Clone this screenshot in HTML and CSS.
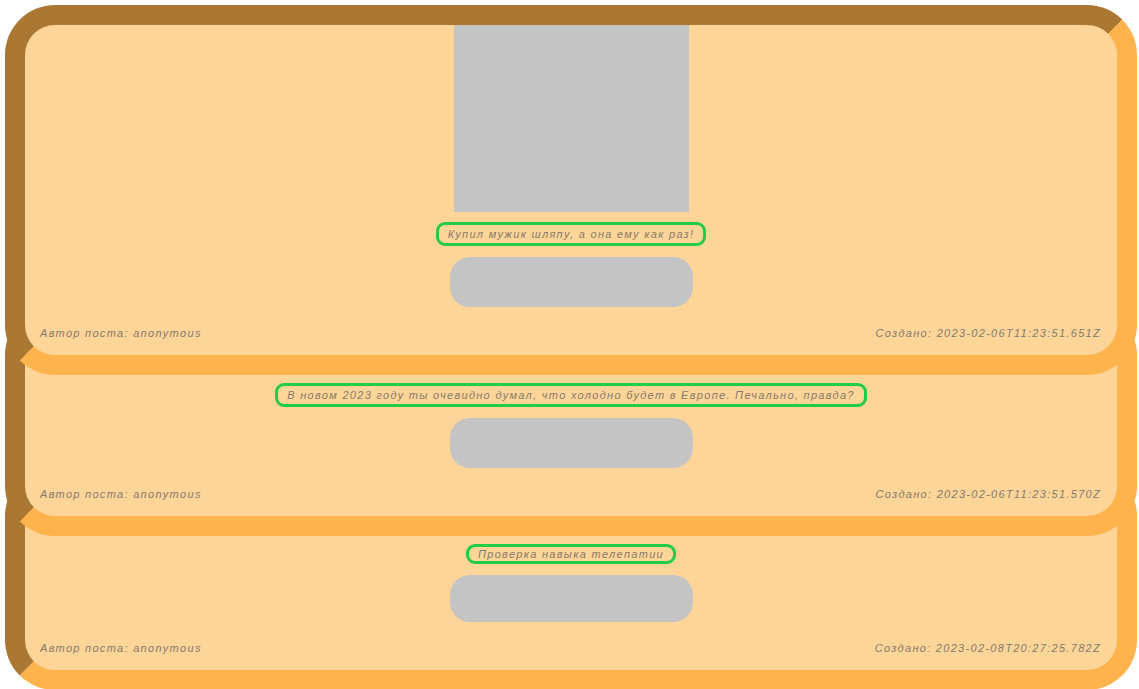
FILE: index.html
```html
<!DOCTYPE html>
<html lang="ru">
<head>
<meta charset="utf-8">
<title>Посты</title>
<link rel="stylesheet" href="styles.css">
</head>
<body>
<main class="feed">
  <article class="post">
    <div class="photo"></div>
    <p class="caption">Купил мужик шляпу, а она ему как раз!</p>
    <button class="action" type="button"></button>
    <footer class="meta">
      <span>Автор поста: anonymous</span>
      <span>Создано: 2023-02-06T11:23:51.651Z</span>
    </footer>
  </article>
  <article class="post">
    <p class="caption">В новом 2023 году ты очевидно думал, что холодно будет в Европе. Печально, правда?</p>
    <button class="action" type="button"></button>
    <footer class="meta">
      <span>Автор поста: anonymous</span>
      <span>Создано: 2023-02-06T11:23:51.570Z</span>
    </footer>
  </article>
  <article class="post">
    <p class="caption">Проверка навыка телепатии</p>
    <button class="action" type="button"></button>
    <footer class="meta">
      <span>Автор поста: anonymous</span>
      <span>Создано: 2023-02-08T20:27:25.782Z</span>
    </footer>
  </article>
</main>
</body>
</html>
```
FILE: styles.css
```css
html, body {
  margin: 0;
  padding: 0;
  background: #ffffff;
}

body {
  font-family: "Liberation Sans", Arial, sans-serif;
}

.feed {
  display: flex;
  flex-direction: column;
  padding: 5px 2px 5px 5px;
}

.post {
  position: relative;
  display: flex;
  flex-direction: column;
  align-items: center;
  background: #fed598;
  border: 20px inset #ffb34d;
  border-radius: 50px;
}

.post:nth-child(1) { z-index: 3; }
.post:nth-child(2) { z-index: 2; }
.post:nth-child(3) { z-index: 1; }

.post + .post {
  margin-top: -70px;
  padding-top: 48px;
}

.photo {
  width: 235px;
  height: 187px;
  background: #c4c4c4;
}

.caption {
  margin: 10px 0 0;
  padding: 0 9px;
  border: 3px solid #22cc44;
  border-radius: 9px;
  font-size: 11px;
  font-style: italic;
  line-height: 18px;
  letter-spacing: 1.3px;
  color: #86796a;
}

.action {
  width: 243px;
  height: 50px;
  margin-top: 11px;
  padding: 0;
  border: none;
  border-radius: 20px;
  background: #c4c4c4;
}

.post:last-child .caption {
  line-height: 14px;
}

.post:last-child .action {
  height: 47px;
}

.meta {
  align-self: stretch;
  display: flex;
  justify-content: space-between;
  margin-top: 19px;
  padding: 0 16px 15px 15px;
  font-size: 11px;
  font-style: italic;
  line-height: 14px;
  letter-spacing: 1.3px;
  color: #86796a;
}
```
